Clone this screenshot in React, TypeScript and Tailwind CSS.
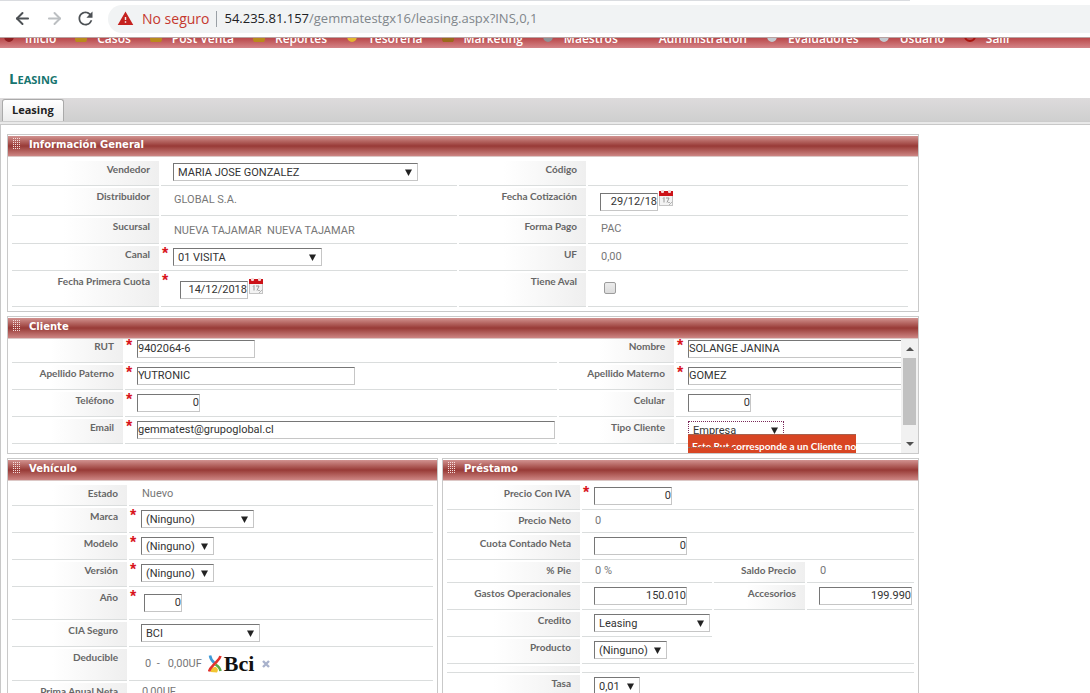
import React from "react";
import { ArrowLeft, ArrowRight } from "lucide-react";
import { MdRefresh, MdWarning } from "react-icons/md";

type Kids = { children?: React.ReactNode };

const menu = [
  { text: "Inicio", color: "#8e1f22", shape: "disc" },
  { text: "Casos", color: "#b98a1c", shape: "folder" },
  { text: "Post Venta", color: "#b98a1c", shape: "folder" },
  { text: "Reportes", color: "#b98a1c", shape: "folder" },
  { text: "Tesorería", color: "#e3b62f", shape: "disc" },
  { text: "Marketing", color: "#9a6a1c", shape: "folder" },
  { text: "Maestros", color: "#8f9296", shape: "disc" },
  { text: "Administración", color: "none", shape: "none" },
  { text: "Evaluadores", color: "#c3c9cf", shape: "disc" },
  { text: "Usuario", color: "#c3c9cf", shape: "disc" },
  { text: "Salir", color: "#a8140f", shape: "ring" },
];

function MenuIcon({ shape, color }: { shape: string; color: string }) {
  return (
    <svg width="12" height="12" viewBox="0 0 12 12" className="mb-[4px]" aria-hidden="true">
      {shape === "disc" && <ellipse cx="6" cy="6" rx="5" ry="6" fill={color} />}
      {shape === "folder" && <path d="M0 1h12v9l-1 2H1l-1-2z" fill={color} />}
      {shape === "ring" && <circle cx="6" cy="6" r="5" fill="none" stroke={color} strokeWidth="2" />}
    </svg>
  );
}

function Grip() {
  return (
    <svg width="9" height="13" viewBox="0 0 9 13" fill="#f6dedd" aria-hidden="true" shapeRendering="crispEdges">
      {[0, 2, 4, 6, 8, 10].map((y) =>
        [0, 2, 4, 6].map((x) => <rect key={`${x}-${y}`} x={x} y={y} width="1" height="1" />),
      )}
    </svg>
  );
}

function Panel({ title, children }: Kids & { title: string }) {
  return (
    <section className="min-w-0 border border-[#c9c9c9] bg-white pt-px">
      <h2 className="flex h-[21px] items-start gap-[7px] border-b border-[#dcc8c6] bg-linear-to-b from-[#d19290] via-[#983a37] to-[#cd8684] pl-[5px] pt-[2px] font-['DejaVu_Sans','Verdana',sans-serif] text-[10px] leading-[14px] font-bold text-white">
        <Grip />
        {title}
      </h2>
      {children}
    </section>
  );
}

function Label({ children, htmlFor }: Kids & { htmlFor?: string }) {
  const cls =
    "block border-b border-[#dadddd] bg-linear-to-r from-white from-35% to-[#efefef] pr-[9px] text-right text-[10px] leading-4 font-bold whitespace-nowrap text-[#666]";
  return htmlFor ? (
    <label htmlFor={htmlFor} className={cls}>
      {children}
    </label>
  ) : (
    <span className={cls}>{children}</span>
  );
}

function Value({ children, required, pad = "pt-[2px] pb-1", className = "" }: Kids & { required?: boolean; pad?: string; className?: string }) {
  return (
    <div className={`flex min-w-0 items-start border-b border-[#dadddd] ${className}`}>
      <span className="w-3 shrink-0 pl-px font-['Liberation_Sans',sans-serif] text-base leading-4 font-bold text-[#d8141c]">
        {required ? "*" : ""}
      </span>
      <div className={`flex items-start leading-[18px] ${pad}`}>{children}</div>
    </div>
  );
}

function Text({ children }: Kids) {
  return <span className="pl-px font-['Roboto',sans-serif] whitespace-pre text-[#777]">{children}</span>;
}

const edge = "border border-t-[#767676] border-l-[#767676] border-r-[#c6c6c6] border-b-[#c6c6c6]";

function Input({ id, value, className }: { id: string; value: string; className: string }) {
  return (
    <input
      id={id}
      defaultValue={value}
      className={`block h-[18px] shrink-0 bg-white font-['Roboto',sans-serif] text-[#333] ${edge} ${className}`}
    />
  );
}

function Select({ id, value, className, frame = edge }: { id: string; value: string; className: string; frame?: string }) {
  return (
    <span className={`relative block shrink-0 ${className}`}>
      <select id={id} className={`block h-[18px] w-full appearance-none bg-white pl-1 font-['Roboto',sans-serif] text-[#333] ${frame}`}>
        <option>{value}</option>
      </select>
      <svg className="pointer-events-none absolute top-[6px] right-[6px]" width="7" height="7" viewBox="0 0 7 7" aria-hidden="true">
        <path d="M0 0.5h7L3.5 7z" fill="#222" />
      </svg>
    </span>
  );
}

function Calendar({ label }: { label: string }) {
  return (
    <button type="button" aria-label={label} className="-mt-[3px] ml-px block">
      <svg width="14" height="16" viewBox="0 0 14 16">
        <rect x="0.5" y="3.5" width="13" height="12" fill="#f3f3f3" stroke="#c4c4c4" />
        <rect y="1" width="14" height="5" fill="#cc1218" />
        <rect x="2" width="3" height="3" rx="1" fill="#f4d6d6" />
        <rect x="9" width="3" height="3" rx="1" fill="#f4d6d6" />
        <path d="M4 8.500l1-1v5M7 8h3l-2 4.500" fill="none" stroke="#9a9a9a" />
        <path d="M10 15l3.500-3.500M9 12.500h2" fill="none" stroke="#b5b5b5" />
      </svg>
    </button>
  );
}

function BciLogo() {
  return (
    <span className="ml-[6px] flex h-5 items-center">
      <svg width="14" height="18" viewBox="0 0 14 18" fill="none" strokeWidth="2.600" aria-hidden="true">
        <path d="M2 0.500C2.500 4 4 6 6.500 8" stroke="#3f9bd8" />
        <path d="M7.500 9.500C10 11 12 13 12.500 16" stroke="#5aa845" />
        <path d="M2.500 15.500C4 12 6.500 11.500 8.500 12.500C10.500 14 10 16 9 17.500L2.500 17z" fill="#f2c531" />
        <path d="M12.500 1C11.500 5 8.500 6.500 6 9.500C4 11.500 2 13 1 16.500" stroke="#e2332d" />
      </svg>
      <span className="ml-[2px] font-['Liberation_Serif',serif] text-[22px] leading-5 font-bold text-[#111]">Bci</span>
    </span>
  );
}

export default function App() {
  return (
    <div className="flex h-screen flex-col overflow-hidden bg-white font-['Lato',sans-serif] text-[11px]">
      <header className="shrink-0">
        <div className="mr-[180px] h-px bg-[#dadce0]" />
        <div className="flex h-9 items-center pl-[13px] pb-px font-['Open_Sans',sans-serif] text-sm">
          <button type="button" aria-label="Atrás" className="text-[#4d5155]">
            <ArrowLeft size={19} strokeWidth={2.5} />
          </button>
          <button type="button" aria-label="Adelante" className="ml-[13px] text-[#bcbfc2]">
            <ArrowRight size={19} strokeWidth={2.5} />
          </button>
          <button type="button" aria-label="Recargar" className="ml-[11px] text-[#4d5155]">
            <MdRefresh size={21} />
          </button>
          <div className="ml-3 flex h-7 flex-1 items-center rounded-l-full bg-[#f1f3f4] pl-[9px]">
            <MdWarning size={17} className="text-[#c5221f]" />
            <span className="ml-2 text-[#c5392f]">No seguro</span>
            <span className="mx-[7px] h-4 w-px bg-[#9aa0a6]" />
            <span className="text-[13px] whitespace-nowrap text-[#80868b]">
              <span className="text-[#202124]">54.235.81.157</span>/gemmatestgx16/leasing.aspx?INS,0,1
            </span>
          </div>
        </div>
      </header>

      <nav className="flex h-[11px] shrink-0 items-end gap-[19px] overflow-hidden border-t border-[#b9a3a2] bg-linear-to-b from-[#b9474a] to-[#d48488] pl-[3px] font-['Open_Sans',sans-serif] text-xs leading-[14px] font-semibold text-white">
        {menu.map((item) => (
          <a key={item.text} href="#" className="flex shrink-0 items-end gap-[10px] pb-[2px]">
            <MenuIcon shape={item.shape} color={item.color} />
            {item.text}
          </a>
        ))}
      </nav>

      <h1 className="mt-5 mb-[10px] shrink-0 pl-[9px] font-['Open_Sans',sans-serif] text-[15px] leading-5 font-bold text-[#17756f] [font-variant:small-caps]">
        Leasing
      </h1>

      <div className="flex h-6 shrink-0 items-end border-b border-[#cccccc] bg-linear-to-b from-[#dddbdc] to-[#cfcfcf] pl-[2px]">
        <button
          type="button"
          className="h-[22px] rounded-t-[3px] border border-b-0 border-[#aaa] bg-linear-to-b from-white to-[#ececec] px-[9px] font-['Open_Sans',sans-serif] text-[11px] font-bold text-[#222]"
        >
          Leasing
        </button>
      </div>
      <div className="h-[3px] shrink-0 border-b border-[#c8c8c8] bg-[#e9e9e9]" />

      <main className="min-h-0 flex-1 overflow-hidden border-l border-[#c8c8c8] pt-[9px] pl-[6px]">
        <form className="flex w-full max-w-[912px] flex-col gap-1">
          <Panel title="Información General">
            <div className="grid grid-cols-[147px_296fr_127px_320fr] gap-[2px] py-1 pr-[10px] pl-1">
              <Label htmlFor="vendedor">Vendedor</Label>
              <Value>
                <Select id="vendedor" value="MARIA JOSE GONZALEZ" className="w-[245px]" />
              </Value>
              <Label>Código</Label>
              <Value />

              <Label>Distribuidor</Label>
              <Value pad="pt-[3px]">
                <Text>GLOBAL S.A.</Text>
              </Value>
              <Label htmlFor="cotizacion">Fecha Cotización</Label>
              <Value pad="pt-[5px] pb-1 h-[27px]">
                <Input id="cotizacion" value="29/12/18" className="w-[58px] text-right" />
                <Calendar label="Elegir fecha de cotización" />
              </Value>

              <Label>Sucursal</Label>
              <Value pad="pt-1 pb-[3px]">
                <Text>{"NUEVA TAJAMAR  NUEVA TAJAMAR"}</Text>
              </Value>
              <Label>Forma Pago</Label>
              <Value>
                <Text>PAC</Text>
              </Value>

              <Label htmlFor="canal">Canal</Label>
              <Value required>
                <Select id="canal" value="01 VISITA" className="w-[149px]" />
              </Value>
              <Label>UF</Label>
              <Value>
                <Text>0,00</Text>
              </Value>

              <Label htmlFor="primera">Fecha Primera Cuota</Label>
              <Value required pad="pt-2 pb-[7px] pl-[7px] h-[33px]">
                <Input id="primera" value="14/12/2018" className="w-[68px] text-right" />
                <Calendar label="Elegir fecha de primera cuota" />
              </Value>
              <Label htmlFor="aval">Tiene Aval</Label>
              <Value pad="pt-[9px] pl-1">
                <input
                  id="aval"
                  type="checkbox"
                  className="block size-3 appearance-none rounded-[2px] border border-[#9c9c9c] bg-linear-to-b from-[#ececec] to-[#dcdcdc]"
                />
              </Value>
            </div>
          </Panel>

          <Panel title="Cliente">
            <div className="flex h-[114px]">
              <div className="min-w-0 flex-1 overflow-hidden">
                <div className="-mt-px grid grid-cols-[111px_432fr_115px_225fr] gap-[2px] pl-1">
                  <Label htmlFor="rut">RUT</Label>
                  <Value required>
                    <Input id="rut" value="9402064-6" className="w-[118px]" />
                  </Value>
                  <Label htmlFor="nombre">Nombre</Label>
                  <Value required>
                    <Input id="nombre" value="SOLANGE JANINA" className="w-[218px]" />
                  </Value>

                  <Label htmlFor="paterno">Apellido Paterno</Label>
                  <Value required>
                    <Input id="paterno" value="YUTRONIC" className="w-[218px]" />
                  </Value>
                  <Label htmlFor="materno">Apellido Materno</Label>
                  <Value required>
                    <Input id="materno" value="GOMEZ" className="w-[218px]" />
                  </Value>

                  <Label htmlFor="telefono">Teléfono</Label>
                  <Value required>
                    <Input id="telefono" value="0" className="w-[63px] text-right" />
                  </Value>
                  <Label htmlFor="celular">Celular</Label>
                  <Value>
                    <Input id="celular" value="0" className="w-[63px] text-right" />
                  </Value>

                  <Label htmlFor="email">Email</Label>
                  <Value required>
                    <Input id="email" value="gemmatest@grupoglobal.cl" className="w-[418px]" />
                  </Value>
                  <Label htmlFor="tipo">Tipo Cliente</Label>
                  <Value>
                    <div className="relative">
                      <Select id="tipo" value="Empresa" className="w-24" frame="border border-dotted border-[#7a2a5a]" />
                      <div
                        role="alert"
                        className="absolute top-[13px] left-0 h-5 w-[168px] overflow-hidden border-t border-[#a8604c] bg-[#d84523] pt-[2px] pl-1 text-[10px] leading-[18px] font-bold whitespace-nowrap text-white"
                      >
                        Este Rut corresponde a un Cliente no
                        <span className="absolute top-[12px] left-0 h-2 w-[46px] border-t border-dotted border-[#8a7a70] bg-[#d84523]" />
                      </div>
                    </div>
                  </Value>
                </div>
              </div>
              <div className="flex w-[17px] flex-col items-center bg-[#f1f1f1]">
                <button type="button" aria-label="Subir" className="flex h-[19px] w-full items-center justify-center">
                  <svg width="8" height="4" viewBox="0 0 8 4" aria-hidden="true">
                    <path d="M0 4L4 0L8 4z" fill="#505050" />
                  </svg>
                </button>
                <div className="h-[67px] w-[13px] bg-[#c1c1c1]" />
                <button type="button" aria-label="Bajar" className="mt-auto flex h-[19px] w-full items-center justify-center">
                  <svg width="8" height="4" viewBox="0 0 8 4" aria-hidden="true">
                    <path d="M0 0L4 4L8 0z" fill="#505050" />
                  </svg>
                </button>
              </div>
            </div>
          </Panel>

          <div className="grid grid-cols-[431fr_477fr] gap-1">
            <Panel title="Vehículo">
              <div className="grid grid-cols-[115px_1fr] gap-[2px] py-1 pl-1 pr-1">
                <Label>Estado</Label>
                <Value pad="pb-[2px]">
                  <Text>Nuevo</Text>
                </Value>
                <Label htmlFor="marca">Marca</Label>
                <Value required>
                  <Select id="marca" value="(Ninguno)" className="w-[113px]" />
                </Value>
                <Label htmlFor="modelo">Modelo</Label>
                <Value required>
                  <Select id="modelo" value="(Ninguno)" className="w-[73px]" />
                </Value>
                <Label htmlFor="version">Versión</Label>
                <Value required>
                  <Select id="version" value="(Ninguno)" className="w-[73px]" />
                </Value>
                <Label htmlFor="anio">Año</Label>
                <Value required pad="pt-[5px] pb-[7px] pl-[3px]">
                  <Input id="anio" value="0" className="w-[38px] text-right" />
                </Value>
                <Label htmlFor="cia">CIA Seguro</Label>
                <Value>
                  <Select id="cia" value="BCI" className="w-[119px]" />
                </Value>
                <Label>Deducible</Label>
                <Value pad="pt-[5px] pb-[6px] pl-[3px]">
                  <div className="flex h-5 items-center">
                    <Text>{"0  -   0,00UF"}</Text>
                    <BciLogo />
                    <button type="button" aria-label="Quitar deducible" className="ml-2">
                      <svg width="8" height="8" viewBox="0 0 8 8" aria-hidden="true">
                        <path d="M1 1l6 6M7 1L1 7" stroke="#a9b2cc" strokeWidth="2.400" />
                      </svg>
                    </button>
                  </div>
                </Value>
                <Label>Prima Anual Neta</Label>
                <Value pad="pb-[2px]">
                  <Text>0,00UF</Text>
                </Value>
              </div>
            </Panel>

            <Panel title="Préstamo">
              <div className="grid grid-cols-[133px_130fr_91px_107fr] gap-[2px] py-1 pl-1 pr-1">
                <Label htmlFor="iva">Precio Con IVA</Label>
                <Value required className="col-span-3">
                  <Input id="iva" value="0" className="w-[78px] text-right" />
                </Value>
                <Label>Precio Neto</Label>
                <Value pad="pb-[2px]" className="col-span-3">
                  <Text>0</Text>
                </Value>
                <Label htmlFor="cuota">Cuota Contado Neta</Label>
                <Value className="col-span-3">
                  <Input id="cuota" value="0" className="w-[93px] text-right" />
                </Value>
                <Label>% Pie</Label>
                <Value pad="pb-[2px]">
                  <Text>0 %</Text>
                </Value>
                <Label>Saldo Precio</Label>
                <Value pad="pb-[2px]">
                  <Text>0</Text>
                </Value>
                <Label htmlFor="gastos">Gastos Operacionales</Label>
                <Value>
                  <Input id="gastos" value="150.010" className="w-[93px] text-right" />
                </Value>
                <Label htmlFor="accesorios">Accesorios</Label>
                <Value>
                  <Input id="accesorios" value="199.990" className="w-[93px] text-right" />
                </Value>
                <Label htmlFor="credito">Credito</Label>
                <Value>
                  <Select id="credito" value="Leasing" className="w-[116px]" />
                </Value>
                <span className="col-span-2" />
                <Label htmlFor="producto">Producto</Label>
                <Value className="col-span-3">
                  <Select id="producto" value="(Ninguno)" className="w-[73px]" />
                </Value>
                <Label />
                <div className="col-span-3 h-[7px] border-b border-[#dadddd]" />
                <Label htmlFor="tasa">Tasa</Label>
                <Value className="col-span-3">
                  <Select id="tasa" value="0,01" className="w-[46px]" />
                </Value>
              </div>
            </Panel>
          </div>
        </form>
      </main>
    </div>
  );
}
